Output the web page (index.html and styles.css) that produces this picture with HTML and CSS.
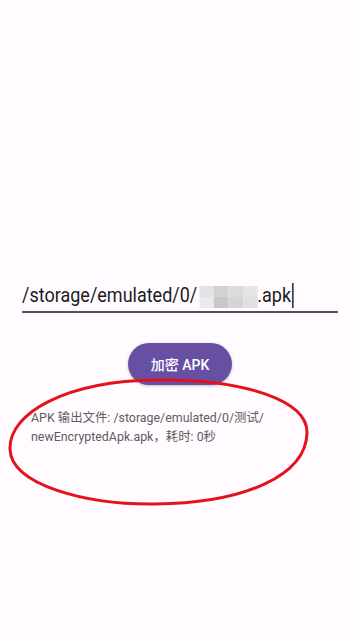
FILE: index.html
```html
<!DOCTYPE html>
<html lang="zh">
<head>
<meta charset="utf-8">
<link rel="stylesheet" href="styles.css">
</head>
<body>
<main class="screen">
  <div class="field">
    <span class="path">/storage/emulated/0/<span class="mosaic"><i class="m1"></i><i class="m2"></i><i class="m3"></i><i class="m4"></i><i class="m5"></i><i class="m6"></i><i class="m7"></i><i class="m8"></i></span>.apk<span class="cursor"></span></span>
  </div>
  <button class="btn">加密 APK</button>
  <div class="result">
    <p class="out">APK 输出文件: /storage/emulated/0/测试/<br>newEncryptedApk.apk，耗时: 0秒</p>
    <svg class="circle" viewBox="0 0 310 140" width="310" height="140" aria-hidden="true">
      <path d="M150 5 C 60 6, 3 38, 4 74 C 5 110, 80 130, 150 129 C 240 128, 300 100, 301 58 C 302 26, 240 4, 150 5 Z" fill="none" stroke="#e3121b" stroke-width="3"/>
    </svg>
  </div>
</main>
</body>
</html>
```
FILE: styles.css
```css
* { box-sizing: border-box; }
html, body { margin: 0; padding: 0; }
body {
  width: 360px;
  height: 640px;
  background: #fffbfe;
  font-family: Roboto, "Noto Sans CJK SC", sans-serif;
  overflow: hidden;
}
.screen {
  display: flex;
  flex-direction: column;
  align-items: center;
  padding-top: 281px;
}
.field {
  width: 316px;
  display: flex;
  align-items: center;
  border-bottom: 2px solid #55505f;
  padding: 0 0 2px 0;
  height: 32px;
}
.path {
  display: inline-flex;
  align-items: center;
  font-size: 21px;
  color: #1c1b1f;
  line-height: 28px;
  white-space: nowrap;
  transform: scaleX(0.857);
  transform-origin: left center;
}
.mosaic {
  display: inline-grid;
  grid-template-columns: repeat(4, 17px);
  grid-template-rows: repeat(2, 11px);
  margin: 3px 0 0 2px;
}
.mosaic i { display: block; }
.m1 { background: #e4e2e5; }
.m2 { background: #d3d1d4; }
.m3 { background: #dcdadd; }
.m4 { background: #e6e4e7; }
.m5 { background: #eceaed; }
.m6 { background: #c9c7ca; }
.m7 { background: #d6d4d7; }
.m8 { background: #e1dfe2; }
.cursor {
  width: 2px;
  height: 25px;
  background: #3e3a48;
  margin-left: 1px;
}
.btn {
  margin-top: 30px;
  width: 104px;
  height: 42px;
  border: none;
  border-radius: 21px;
  background: #6750a4;
  color: #ffffff;
  font-family: Roboto, "Noto Sans CJK SC", sans-serif;
  font-size: 14px;
  font-weight: 500;
  box-shadow: 0 1px 3px rgba(0,0,0,0.25);
}
.result {
  position: relative;
  width: 360px;
  margin-top: 23px;
  padding-left: 31px;
}
.out {
  margin: 0;
  font-size: 12.4px;
  line-height: 19px;
  color: #5e5b63;
}
.circle {
  position: absolute;
  left: 6px;
  top: -33px;
}
```
